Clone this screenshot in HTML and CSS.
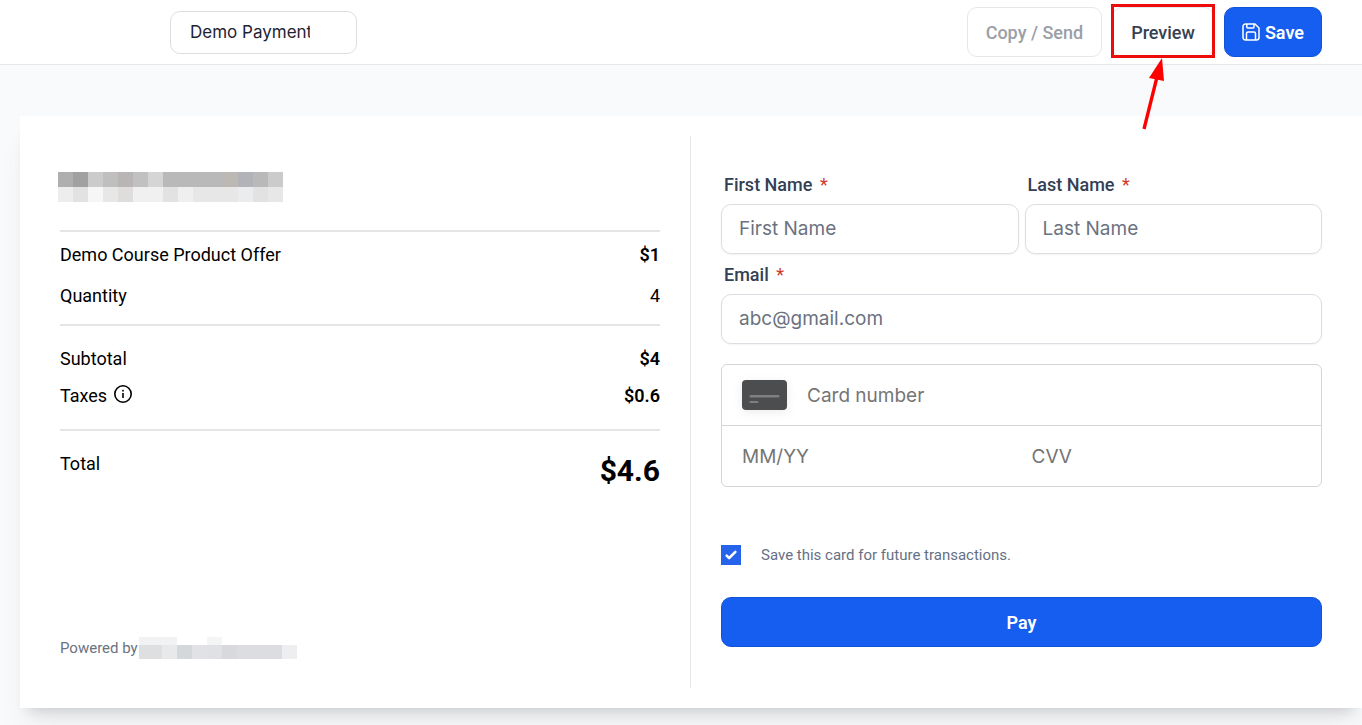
FILE: index.html
```html
<!DOCTYPE html>
<html lang="en">
  <head>
    <meta charset="UTF-8" />
    <meta name="viewport" content="width=device-width, initial-scale=1.0" />
    <title>Demo Payment</title>
    <link rel="stylesheet" href="styles.css">
  </head>
  <body>
    <header class="topbar">
      <input type="text" class="page-name" aria-label="Page name" value="Demo Payment" />
      <div class="actions">
        <button type="button" class="btn" disabled>Copy / Send</button>
        <div class="highlight">
          <button type="button" class="btn">Preview</button>
          <svg class="arrow" width="24" height="74" viewBox="0 0 24 74" aria-hidden="true">
            <path d="M4 72 L17 20" stroke="#f00" stroke-width="3.4" fill="none" />
            <path d="M22 1 L9 21 L24 24 Z" fill="#f00" />
          </svg>
        </div>
        <button type="button" class="btn btn-primary">
          <svg width="18" height="18" viewBox="0 0 18 18" fill="none" stroke="currentColor" stroke-width="1.5" stroke-linejoin="round" aria-hidden="true">
            <path d="M3.500 1 H13 L17 5 V14.500 A2.500 2.500 0 0 1 14.500 17 H3.500 A2.500 2.500 0 0 1 1 14.500 V3.500 A2.500 2.500 0 0 1 3.500 1 Z" />
            <path d="M4.800 1 V4 A1 1 0 0 0 5.800 5 H11 A1 1 0 0 0 12 4 V1" />
            <path d="M4.500 17 V10.500 A1.500 1.500 0 0 1 6 9 H12 A1.500 1.500 0 0 1 13.500 10.500 V17" />
          </svg>
          Save
        </button>
      </div>
    </header>

    <main class="page">
      <div class="checkout">
        <section class="summary">
          <!-- pixelated business name -->
          <svg class="brand" width="225" height="30" viewBox="0 0 15 2" shape-rendering="crispEdges" aria-hidden="true">
            <rect width="15" height="1" fill="#b9b9b9" />
            <rect y="1" width="15" height="1" fill="#e7e7e7" />
            <rect width="1" height="1" fill="#afafaf" />
            <rect x="1" width="1" height="1" fill="#a1a1a1" />
            <rect x="2" width="1" height="1" fill="#cbcbcb" />
            <rect x="3" width="1" height="1" fill="#bfbfbf" />
            <rect x="4" width="1" height="1" fill="#b8b5b4" />
            <rect x="5" width="1" height="1" fill="#c1c1c1" />
            <rect x="6" width="1" height="1" fill="#d5d5d5" />
            <rect x="11" width="1" height="1" fill="#bcb9b4" />
            <rect x="12" width="1" height="1" fill="#b1b3b8" />
            <rect x="14" width="1" height="1" fill="#cbcbcb" />
            <rect y="1" width="1" height="1" fill="#ededed" />
            <rect x="1" y="1" width="1" height="1" fill="#e2e2e2" />
            <rect x="2" y="1" width="1" height="1" fill="#f6f6f6" />
            <rect x="4" y="1" width="1" height="1" fill="#dfdddb" />
            <rect x="5" y="1" width="2" height="1" fill="#f0f0f0" />
            <rect x="7" y="1" width="1" height="1" fill="#e2e2e2" />
            <rect x="8" y="1" width="1" height="1" fill="#efefef" />
            <rect x="12" y="1" width="1" height="1" fill="#ebecee" />
            <rect x="13" y="1" width="1" height="1" fill="#e2e2e2" />
          </svg>

          <div class="lines items">
            <div class="line"><span>Demo Course Product Offer</span><b>$1</b></div>
            <div class="line"><span>Quantity</span><span>4</span></div>
          </div>
          <div class="lines">
            <div class="line"><span>Subtotal</span><b>$4</b></div>
            <div class="line">
              <span class="taxes">
                Taxes
                <svg width="20" height="20" viewBox="0 0 20 20" aria-hidden="true">
                  <circle cx="10" cy="10" r="8.200" fill="none" stroke="#000" stroke-width="1.600" />
                  <rect x="9.200" y="9" width="1.600" height="5" />
                  <rect x="9.200" y="5.800" width="1.600" height="1.700" />
                </svg>
              </span>
              <b>$0.6</b>
            </div>
          </div>
          <div class="lines">
            <div class="line"><span>Total</span><b class="total">$4.6</b></div>
          </div>

          <div class="powered">
            Powered by
            <svg width="158" height="22" viewBox="0 0 158 22" shape-rendering="crispEdges" aria-hidden="true">
              <rect width="38" height="8" fill="#f1f2f3" />
              <rect x="68" width="15" height="8" fill="#f4f5f5" />
              <rect y="8" width="158" height="14" fill="#dcdde0" />
              <rect y="8" width="23" height="14" fill="#dddfe1" />
              <rect x="23" y="8" width="15" height="14" fill="#e8e9eb" />
              <rect x="38" y="8" width="15" height="14" fill="#d5d8da" />
              <rect x="53" y="8" width="15" height="14" fill="#e1e2e5" />
              <rect x="68" y="8" width="15" height="14" fill="#e0e1e4" />
              <rect x="83" y="8" width="15" height="14" fill="#d7d9dc" />
              <rect x="143" y="8" width="15" height="14" fill="#eeeef1" />
            </svg>
          </div>
        </section>

        <form class="payment">
          <div class="row">
            <div class="field">
              <label for="firstName">First Name <span class="required">*</span></label>
              <input type="text" id="firstName" placeholder="First Name" />
            </div>
            <div class="field">
              <label for="lastName">Last Name <span class="required">*</span></label>
              <input type="text" id="lastName" placeholder="Last Name" />
            </div>
          </div>
          <div class="field">
            <label for="email">Email <span class="required">*</span></label>
            <input type="email" id="email" placeholder="abc@gmail.com" />
          </div>

          <div class="card-box">
            <div class="card-row">
              <svg class="card-icon" width="45" height="30" viewBox="0 0 45 30" aria-hidden="true">
                <rect width="45" height="30" rx="4" fill="#4b4d4f" />
                <rect x="7.500" y="15" width="30" height="2.500" rx="1" fill="#7d7f81" />
                <rect x="7.500" y="21" width="9" height="2" rx="1" fill="#7d7f81" />
              </svg>
              <input type="text" aria-label="Card number" placeholder="Card number" />
            </div>
            <div class="card-row">
              <input type="text" aria-label="Expiry date" placeholder="MM/YY" />
              <input type="text" aria-label="CVV" placeholder="CVV" />
            </div>
          </div>

          <label class="save-card">
            <input type="checkbox" checked />
            Save this card for future transactions.
          </label>
          <button type="button" class="btn btn-primary">Pay</button>
        </form>
      </div>
    </main>
  </body>
</html>
```
FILE: styles.css
```css
* {
  box-sizing: border-box;
}

body {
  margin: 0;
  min-height: 100vh;
  overflow-x: hidden;
  background: #f9fafc;
  color: #000;
  font-family: Roboto, sans-serif;
  font-size: 18px;
  line-height: 24px;
}

input,
button {
  font-family: inherit;
  font-size: inherit;
}

svg {
  display: block;
  flex: none;
}

.topbar {
  display: flex;
  justify-content: space-between;
  align-items: center;
  height: 65px;
  padding: 0 40px 0 170px;
  background: #fff;
  border-bottom: 1px solid #e5e7eb;
}

.page-name {
  width: 187px;
  height: 43px;
  padding: 0 46px 0 19px;
  border: 1px solid #dcdee3;
  border-radius: 10px;
  color: #1f2433;
  font-family: Inter, sans-serif;
  font-size: 17px;
}

.actions {
  display: flex;
  gap: 10px;
}

.btn {
  display: flex;
  justify-content: center;
  align-items: center;
  gap: 5px;
  height: 50px;
  padding: 0 18px;
  background: #fff;
  border: 1px solid #e5e7eb;
  border-radius: 10px;
  color: #374151;
  font-weight: 500;
}

.btn:disabled {
  color: #9b9ea5;
}

.btn-primary {
  padding: 0 17px;
  background: #155eef;
  border-color: #1153d6;
  color: #fff;
  font-weight: 600;
}

.highlight {
  position: relative;
}

.highlight::after {
  content: "";
  position: absolute;
  inset: -3px -1px -1px;
  border: 3px solid #ed0c0c;
  pointer-events: none;
}

.arrow {
  position: absolute;
  top: 50px;
  left: 28px;
}

.page {
  padding: 51px 0 17px 20px;
}

.checkout {
  display: grid;
  grid-template-columns: repeat(2, minmax(0, 1fr));
  padding: 20px;
  background: #fff;
  box-shadow: 0 25px 31px -6px rgba(0, 0, 0, 0.06), 0 10px 13px -8px rgba(0, 0, 0, 0.16);
}

.summary {
  display: flex;
  flex-direction: column;
  padding: 36px 30px 28px 20px;
  border-right: 1px solid #e5e7eb;
}

.brand {
  margin: 0 0 28px -2px;
}

.lines {
  display: flex;
  flex-direction: column;
  gap: 13px;
  padding: 21px 0;
  border-top: 2px solid #e5e5e5;
}

.items {
  gap: 17px;
  padding: 11px 0 16px;
}

.line {
  display: flex;
  justify-content: space-between;
}

.line b {
  font-weight: 600;
}

.taxes {
  display: flex;
  gap: 6px;
}

.line .total {
  font-size: 30px;
  font-weight: 700;
  line-height: 38px;
}

.powered {
  display: flex;
  align-items: center;
  gap: 1px;
  margin-top: auto;
  color: #6b7280;
  font-size: 15px;
}

.payment {
  display: flex;
  flex-direction: column;
  padding: 37px 20px 41px 30px;
}

.row {
  display: grid;
  grid-template-columns: repeat(2, minmax(0, 1fr));
  gap: 6px;
  margin-bottom: 9px;
}

.field label {
  display: block;
  margin: 0 3px 7px;
  color: #344054;
  font-weight: 500;
}

.required {
  margin-left: 3px;
  color: #d0392b;
  font-weight: 400;
}

.field input {
  display: block;
  width: 100%;
  height: 50px;
  padding: 0 17px 2px;
  border: 1px solid #dcdee3;
  border-radius: 10px;
  box-shadow: 0 1px 2px rgba(16, 24, 40, 0.05);
  font-family: Inter, sans-serif;
  font-size: 19px;
}

.field input::placeholder {
  color: #6b7280;
}

.card-box {
  margin: 20px 0 58px;
  border: 1px solid #d5d5d5;
  border-radius: 6px;
}

.card-row {
  display: flex;
  align-items: center;
  gap: 20px;
  padding: 0 20px;
}

.card-row + .card-row {
  border-top: 1px solid #d5d5d5;
}

.card-row input {
  flex: 1;
  min-width: 0;
  height: 60px;
  padding: 0;
  background: none;
  border: 0;
  font-family: Inter, sans-serif;
  font-size: 19px;
}

.card-row input::placeholder {
  color: #757575;
}

.card-icon {
  filter: drop-shadow(0 2px 5px rgba(0, 0, 0, 0.08));
}

.save-card {
  display: flex;
  align-items: center;
  gap: 20px;
  margin-bottom: 32px;
  color: #667085;
  font-size: 15px;
  line-height: 20px;
}

.save-card input {
  appearance: none;
  width: 20px;
  height: 20px;
  margin: 0;
  background: #2563eb url("data:image/svg+xml,%3Csvg viewBox='0 0 16 16' fill='white' xmlns='http://www.w3.org/2000/svg'%3E%3Cpath d='M12.207 4.793a1 1 0 010 1.414l-5 5a1 1 0 01-1.414 0l-2-2a1 1 0 011.414-1.414L6.500 9.086l4.293-4.293a1 1 0 011.414 0z'/%3E%3C/svg%3E");
}
```
